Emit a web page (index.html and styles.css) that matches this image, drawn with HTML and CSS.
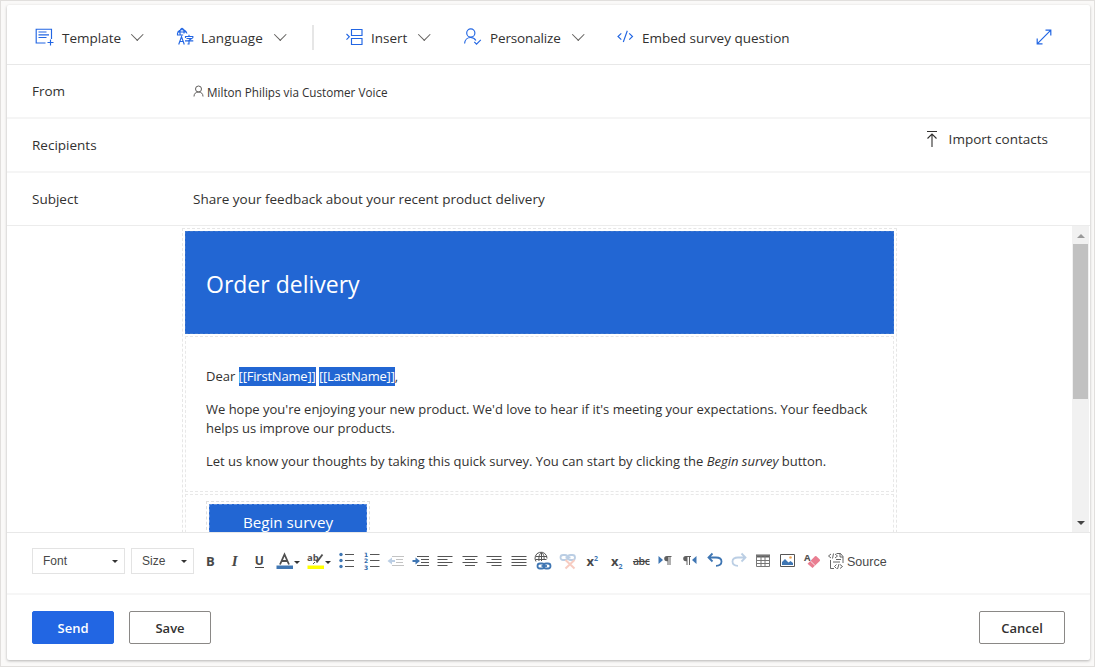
FILE: index.html
```html
<!DOCTYPE html>
<html lang="en">
<head>
<meta charset="utf-8">
<title>Compose email</title>
<link rel="stylesheet" href="styles.css">
</head>
<body>
<main class="card">
  <header class="commands">
    <button class="cmd template"><svg width="20" height="20" viewBox="0 0 20 20"><path d="M11.5 16H2.2V2.2H17.5V12M4.5 5h8M4.5 7.8h10.5M4.5 10.5h8M13.5 15.5h6M16.5 12.5v6" /></svg><span>Template</span><i class="chev"></i></button>
    <button class="cmd language"><svg width="20" height="20" viewBox="0 0 20 20"><path d="M1.5 8.5a4.8 4.8 0 1 1 9.4-2M1.3 5h9.2M1.2 8h6M4.3 8.5C3.6 5 4 2 6 1.3c1.7.5 2.2 3 2 5.2M2.7 17.5 5.5 9.8l2.8 7.7M3.5 14.5h4M9.5 11V9.5h7.3V11M13 7.8v1.5M10.5 11.5h5L13 13.2V17h-1.5M9 13.8h8.3" /></svg><span>Language</span><i class="chev"></i></button>
    <div class="divider"></div>
    <button class="cmd insert"><svg width="20" height="20" viewBox="0 0 20 20"><path d="M6.5 2.5h10.5v6H6.5zM6.500 11.500h10.500v6H6.500zM1.500 7l2.800 2.800-2.800 2.800" /></svg><span>Insert</span><i class="chev"></i></button>
    <button class="cmd personalize"><svg width="20" height="20" viewBox="0 0 20 20"><circle cx="7.8" cy="6" r="4.1"/><path d="M1.6 16.5c.3-3.5 2.8-6 6-6 2.6 0 4.1 1 5.3 3M11.3 14.8l2.2 2.3 4.3-4.3" /></svg><span>Personalize</span><i class="chev"></i></button>
    <button class="cmd embed"><svg width="20" height="20" viewBox="0 0 20 20"><path d="M5.3 6.3 2 9.5l3.3 3.2M13.2 6.3l3.3 3.2-3.3 3.2M11.3 3.8 7.3 15" /></svg><span>Embed survey question</span></button>
    <button class="expand"><svg width="16" height="16" viewBox="0 0 16 16"><path d="M1.2 14.8 14.8 1.2M9.5 1.2h5.3v5.3M1.2 9.5v5.3h5.3"/></svg></button>
  </header>

  <section class="field from">
    <label>From</label>
    <div class="sender"><svg width="11" height="13" viewBox="0 0 11 13"><circle cx="5.5" cy="4" r="3"/><path d="M1 11.5C1 8.6 2.8 7 5.5 7S10 8.6 10 11.5"/></svg><span>Milton Philips via Customer Voice</span></div>
  </section>
  <section class="field">
    <label>Recipients</label>
    <button class="import"><svg width="14" height="18" viewBox="0 0 14 18"><path d="M2 1.5h10M7 17V4M2.5 8.5 7 4l4.5 4.5"/></svg><span>Import contacts</span></button>
  </section>
  <section class="field last">
    <label>Subject</label>
    <div class="subject">Share your feedback about your recent product delivery</div>
  </section>

  <section class="editor">
    <div class="mail">
      <div class="banner"><h1>Order delivery</h1></div>
      <div class="copy">
        <p>Dear <mark>[[FirstName]]</mark> <mark>[[LastName]]</mark>,</p>
        <p>We hope you're enjoying your new product. We'd love to hear if it's meeting your expectations. Your feedback<br>helps us improve our products.</p>
        <p>Let us know your thoughts by taking this quick survey. You can start by clicking the <em>Begin survey</em> button.</p>
      </div>
      <div class="action"><div class="outline"><a class="begin">Begin survey</a></div></div>
    </div>
    <div class="scrollbar"><i class="up"></i><div class="thumb"></div><i class="down"></i></div>
  </section>

  <section class="format">
    <div class="select font"><span>Font</span><i class="tri"></i></div>
    <div class="select size"><span>Size</span><i class="tri"></i></div>
    <div class="tools">
      <b class="tool bold">B</b>
      <b class="tool italic">I</b>
      <b class="tool under"><span>U</span></b>
      <span class="tool wide"><svg width="18" height="18" viewBox="0 0 18 18"><path class="k2" d="M4 12.5 8.5 2.5 13 12.5M5.6 9h5.8"/><path class="fb" d="M.5 13.500h16.500V17H.5z"/></svg><i class="tri"></i></span>
      <span class="tool wide"><svg width="18" height="18" viewBox="0 0 18 18"><text x="0" y="8.5">ab</text><path class="k2" d="m15.5 2.5-6 8"/><path class="k" d="m8 10-2 2"/><path fill="#ff0" d="M.5 13.500h16.500V17H.5z"/></svg><i class="tri"></i></span>
      <span class="tool"><svg width="18" height="18" viewBox="0 0 18 18"><path class="k" d="M7 2.5h9M7 8.5h9M7 14.5h9"/><circle class="fb" cx="3" cy="2.5" r="1.7"/><circle class="fb" cx="3" cy="8.5" r="1.7"/><circle class="fb" cx="3" cy="14.5" r="1.7"/></svg></span>
      <span class="tool"><svg width="18" height="18" viewBox="0 0 18 18"><path class="k" d="M7 2.5h9.5M7 8.5h9.5M7 14.5h9.5"/><text class="num" x="1" y="4.500">1</text><text class="num" x="1" y="11">2</text><text class="num" x="1" y="17.500">3</text></svg></span>
      <span class="tool faded"><svg width="18" height="18" viewBox="0 0 18 18"><path class="k" d="M5 4.5h12M9 7.5h7M9 10.5h7M5 13.5h12"/><path class="fb" d="M.5 9 5 5.500V8h3v2H5v2.500z"/></svg></span>
      <span class="tool"><svg width="18" height="18" viewBox="0 0 18 18"><path class="k" d="M5 4.5h12M9 7.5h8M9 10.5h8M5 13.5h12"/><path class="fb" d="M8 9 3.500 5.500V8H.5v2h3v2.500z"/></svg></span>
      <span class="tool"><svg width="18" height="18" viewBox="0 0 18 18"><path class="k" d="M1.500 4.500h15M1.500 7.500h10M1.500 10.500h15M1.500 13.500h10"/></svg></span>
      <span class="tool"><svg width="18" height="18" viewBox="0 0 18 18"><path class="k" d="M1.500 4.500h15M4 7.500h10M1.500 10.500h15M4 13.500h10"/></svg></span>
      <span class="tool"><svg width="18" height="18" viewBox="0 0 18 18"><path class="k" d="M1.500 4.500h15M6.500 7.500h10M1.500 10.500h15M6.500 13.500h10"/></svg></span>
      <span class="tool"><svg width="18" height="18" viewBox="0 0 18 18"><path class="k" d="M1.500 4.500h15M1.500 7.500h15M1.500 10.500h15M1.500 13.500h15"/></svg></span>
      <span class="tool"><svg width="18" height="18" viewBox="0 0 18 18"><path class="k" d="M2 9.500a6 6 0 1 1 11-3M2 4.500h11M1.500 7.500h11M5 9C4.500 5 5.500 1 7.500 1S10.500 5 10 8M7.500 1v8"/><rect class="b2" x="3.5" y="11.500" width="7" height="5" rx="2.5"/><rect class="b2" x="9.5" y="11.500" width="7" height="5" rx="2.5"/><path class="b2" d="M7.500 14h5.500"/></svg></span>
      <span class="tool faded"><svg width="18" height="18" viewBox="0 0 18 18"><rect class="b2" x="1.5" y="3" width="7" height="5" rx="2.5"/><rect class="b2" x="9" y="3" width="7" height="5" rx="2.5"/><path class="b2" d="M6.500 5.500h5"/><path class="r2" d="m6.500 8 9 8.500M15.500 8l-9 8.500"/></svg></span>
      <b class="tool script"><span>x<sup>2</sup></span></b>
      <b class="tool script"><span>x<sub>2</sub></span></b>
      <span class="tool strike">abc</span>
      <span class="tool"><svg width="18" height="18" viewBox="0 0 18 18"><path class="fb" d="m1.500 4 4.500 4-4.500 4z"/><path class="fk" d="M14.500 4h-4.700a2.600 2.600 0 0 0 0 5.200h.7V13h1V5h1v8h1V5h1z"/></svg></span>
      <span class="tool"><svg width="18" height="18" viewBox="0 0 18 18"><path class="fb" d="m15.500 4-4.500 4 4.500 4z"/><path class="fk" d="M10 4H4.800a2.600 2.600 0 0 0 0 5.200h.7V13h1V5H8v8h1V5h1z"/></svg></span>
      <span class="tool"><svg width="18" height="18" viewBox="0 0 18 18"><path class="b2" d="M6.500 1.500 2.500 5.500l4 4M3 5.500h7c3.500 0 5.500 1.500 5.500 4s-1.500 4.300-5.500 4.300"/></svg></span>
      <span class="tool faded"><svg width="18" height="18" viewBox="0 0 18 18"><path class="b2" d="m11.500 1.500 4 4-4 4M15 5.500H8c-3.500 0-5.500 1.500-5.500 4s1.500 4.300 5.500 4.300"/></svg></span>
      <span class="tool"><svg width="18" height="18" viewBox="0 0 18 18"><path class="fk" d="M1 2.500h14V5.500H1z"/><path class="kt" d="M1.500 3.500h13v11h-13zM1 8.500h14M1 11.500h14M6 4v10M10 4v10"/></svg></span>
      <span class="tool"><svg width="18" height="18" viewBox="0 0 18 18"><path class="k" d="M1.500 2.500h14v12h-14z"/><path class="fb" d="M3 13V10l3-3 3.500 3.500L11.500 9l2.500 2v2z"/><circle cx="11.500" cy="5.500" r="1.300" fill="#eea55a"/></svg></span>
      <span class="tool"><svg width="18" height="18" viewBox="0 0 18 18"><text x="0" y="9">A</text><path fill="#e97e91" d="M3.500 11.800 11 4.300q.7-.7 1.400 0L15.800 7.500q.6.700 0 1.400L8.500 16z"/><path stroke="#fff" stroke-width=".8" d="m6.400 9 4.500 4.300"/></svg></span>
      <span class="source"><svg width="17" height="18" viewBox="0 0 17 18"><path class="ks" d="M9.500 1.500h4l2.500 3V11M13 1.500V5h3M3.500 8v8.500H7M9 7.500h5M6 10h7M4 2 1.500 4 4 6M8 2l2.500 2L8 6M6.500 1.500l-1 5M9.500 12.500l-2 2 2 2M13 12.500l2.500 2-2.500 2M12 12l-1.500 5"/></svg><span>Source</span></span>
    </div>
  </section>

  <footer class="actions">
    <button class="btn primary">Send</button>
    <button class="btn">Save</button>
    <button class="btn cancel">Cancel</button>
  </footer>
</main>
</body>
</html>
```
FILE: styles.css
```css
* { box-sizing: border-box; }
body {
  margin: 0; width: 1095px; height: 667px; overflow: hidden;
  padding: 4px 5px 5px 6px; background: #faf9f8;
  border: 1px solid #e1dfdd;
  font: 13.5px/20px "Open Sans", sans-serif; color: #323130;
}
button { font: inherit; color: inherit; background: none; border: 0; padding: 0; }
svg { display: block; flex: none; fill: none; overflow: visible; }
.card {
  width: 1083px; height: 655px; background: #fff; border-radius: 2px;
  box-shadow: 0 1px 3px rgba(0,0,0,.28); display: flex; flex-direction: column;
}
.commands {
  height: 60px; flex: none; display: flex; align-items: center;
  border-bottom: 1px solid #e8e8e8; padding: 7px 0 0 27px;
}
.cmd { display: flex; align-items: center; height: 24px; white-space: nowrap; }
.cmd svg { stroke: #2266e3; stroke-width: 1.15; margin: -2px 8px 0 0; }
.chev { width: 8.5px; height: 8.5px; border: solid #605e5c; border-width: 0 1px 1px 0; transform: rotate(45deg); margin: -8px 3px 0 auto; }
.template { width: 110px; }
.language { width: 111px; margin-left: 32px; }
.language svg { margin-right: 5px; }
.language span { letter-spacing: .15px; }
.divider { width: 2px; height: 25px; background: #e6e6e6; margin: -2px 31px 0 25px; }
.insert { width: 86px; margin-right: 32px; }
.insert svg { margin-right: 6px; }
.personalize { width: 122px; margin-right: 31px; }
.personalize svg { margin-right: 7px; }
.personalize span { letter-spacing: -.15px; }
.embed { width: 174px; }
.embed svg { margin-right: 6px; }
.expand { margin: -2px 38px 0 auto; }
.expand svg { stroke: #2266e3; stroke-width: 1.2; }

.field {
  height: 54px; flex: none; display: flex; align-items: center;
  border-bottom: 2px solid #f5f5f5; padding: 0 0 0 25px;
}
.last { height: 53px; border-bottom-width: 1px; border-color: #ececec; }
.field label { width: 161px; }
.sender { display: flex; align-items: center; gap: 3px; font-size: 11.7px; padding-top: 2px; }
.sender svg { stroke: #605e5c; stroke-width: 1; margin-top: -2px; }
.import { display: flex; align-items: center; gap: 10px; margin: -12px 42px 0 auto; }
.import svg { stroke: #323130; stroke-width: 1.1; }
.subject { white-space: nowrap; }

.editor { height: 306px; flex: none; overflow: hidden; display: flex; justify-content: space-between; padding-left: 175px; }
.mail { width: 715px; height: 340px; margin-top: 2px; padding: 2px; border: 1px dashed #e6e6e6; font-size: 13px; }
.banner { height: 103px; background: #2266d3; border: 1px dashed #3c76cf; padding: 38px 20px; }
h1 { margin: 0; font-weight: 400; font-size: 23px; line-height: 28px; color: #fff; }
.copy { height: 156px; margin-top: 2px; border: 1px dashed #e8e8e8; padding: 30px 20px 0; white-space: nowrap; line-height: 19px; letter-spacing: -.01px; }
.copy p { margin: 0 0 14px; }
mark { color: #fff; background: #2266d3; display: inline-block; letter-spacing: -.2px; }
.action { margin-top: 2px; height: 100px; border: 1px dashed #e8e8e8; padding: 6px 20px; }
.outline { width: 164px; height: 60px; border: 1px dashed #dfdfdf; padding: 2px; }
.begin { display: block; height: 50px; border: 1px dashed #5f8fde; background: #2266d3; color: #fff; text-align: center; font-size: 15.2px; line-height: 34px; }
.scrollbar { width: 17px; height: 306px; margin-right: 1px; background: #f1f1f1; display: flex; flex-direction: column; align-items: center; }
.up, .down { width: 0; height: 0; border: 4px solid transparent; }
.up { border-top: 0; border-bottom-color: #999; margin: 8px 0 6px; }
.thumb { width: 15px; height: 155px; background: #c1c1c1; }
.down { border-bottom: 0; border-top-color: #444; margin: auto 0 7px; }

.format { height: 63px; flex: none; border-top: 1px solid #e8e8e8; border-bottom: 2px solid #f6f6f6; display: flex; align-items: flex-start; padding: 15px 0 0 25px; }
.select { height: 26px; border: 1px solid #e3e3e3; display: flex; align-items: center; justify-content: space-between; padding: 0 6px 0 10px; font: 12px "Liberation Sans", sans-serif; color: #484848; }
.font { width: 93px; margin-right: 6px; }
.size { width: 63px; margin-right: 4px; }
.tri { width: 0; height: 0; border: 3px solid transparent; border-top-color: #333; border-bottom: 0; }
.tools { display: flex; align-items: center; height: 26px; color: #484848; }
.tool { width: 24.5px; flex: none; display: flex; justify-content: center; align-items: center; white-space: nowrap; }
.tool svg text { font: bold 9.5px "Open Sans", sans-serif; fill: #505050; }
.tool svg .num { font: bold 6px "DejaVu Sans", sans-serif; fill: #2f68a8; }
.wide { width: 31.75px; justify-content: flex-start; padding-left: 4px; }
.wide .tri { margin-top: 3px; }
.bold, .italic, .under { font-size: 13px; }
.italic { font-family: "Liberation Serif", serif; font-size: 15px; font-style: italic; }
.under span { line-height: 13px; font-size: 12px; border-bottom: 1px solid #484848; }
.k { stroke: #555; stroke-width: 1; }
.ks { stroke: #555; stroke-width: .9; }
.kt { stroke: #777; stroke-width: 1; }
.k2 { stroke: #505050; stroke-width: 1.8; }
.fk { fill: #606060; }
.fb { fill: #3f76b3; }
.b2 { stroke: #3f76b3; stroke-width: 1.8; }
.r2 { stroke: #eb6f50; stroke-width: 2; }
.faded { opacity: .35; }
.script { font-size: 13px; }
.script sup, .script sub { font-size: 7px; color: #3f76b3; line-height: 0; }
.script sup { vertical-align: 5px; }
.script sub { vertical-align: -3px; }
.strike { font-size: 10.5px; text-decoration: line-through; font-weight: 600; letter-spacing: -.4px; }
.source { display: flex; align-items: center; gap: 3px; margin-left: 2px; font: 12.5px "Liberation Sans", sans-serif; }
.source > span { padding-top: 2px; }

.actions { flex: 1; display: flex; align-items: flex-start; padding: 16px 25px 0; }
.btn { width: 82px; height: 33px; border: 1px solid #8a8886; border-radius: 2px; font-weight: 600; font-size: 13px; line-height: 31px; padding-top: 1px; }
.primary { background: #2266e3; border-color: #2266e3; color: #fff; margin-right: 15px; }
.cancel { width: 86px; margin-left: auto; }
```
